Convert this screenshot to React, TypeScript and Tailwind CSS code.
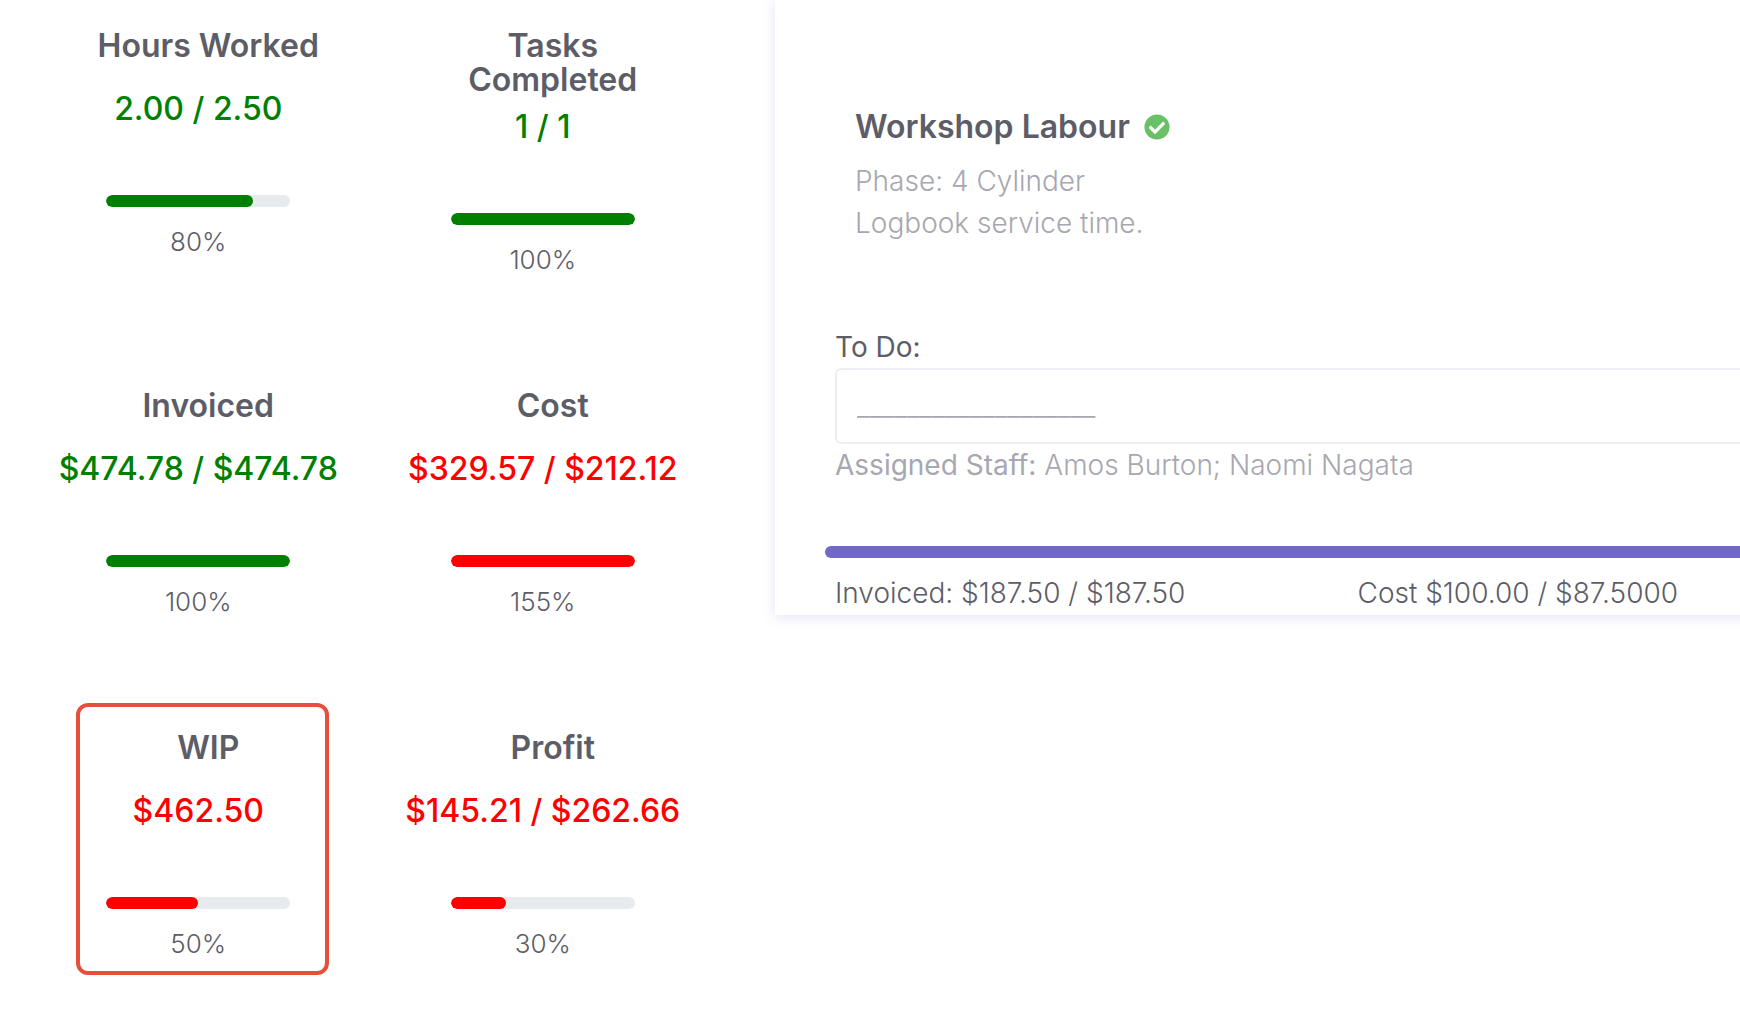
import clsx from 'clsx';
import { FaCheckCircle } from 'react-icons/fa';

interface Stat {
  title: string;
  value: string;
  percent: number;
  good: boolean;
  highlighted?: boolean;
}

const STATS: Stat[] = [
  { title: 'Hours Worked',    value: '2.00 / 2.50',       percent: 80,  good: true },
  { title: 'Tasks Completed', value: '1 / 1',             percent: 100, good: true },
  { title: 'Invoiced',        value: '$474.78 / $474.78', percent: 100, good: true },
  { title: 'Cost',            value: '$329.57 / $212.12', percent: 155, good: false },
  { title: 'WIP',             value: '$462.50',           percent: 50,  good: false, highlighted: true },
  { title: 'Profit',          value: '$145.21 / $262.66', percent: 30,  good: false },
];

function StatTile({ stat }: { stat: Stat }) {
  return (
    <section className="relative flex flex-col items-center text-center">
      {stat.highlighted && (
        <div className="pointer-events-none absolute -top-7 -bottom-2.5 left-[50px] right-[42px] rounded-xl border-4 border-[#e5503c]" />
      )}
      <h2 className="min-h-[50px] w-64 pl-5 text-[32px] leading-[34px] font-semibold">{stat.title}</h2>
      <p className={clsx('text-[32px] leading-[60px] font-medium whitespace-nowrap', stat.good ? 'text-[#008000]' : 'text-[#ff0000]')}>
        {stat.value}
      </p>
      <div className="mt-14 h-3 w-46 overflow-hidden rounded-full bg-[#e8ebee]">
        <div
          className={clsx('h-full rounded-full', stat.good ? 'bg-[#008000]' : 'bg-[#ff0000]')}
          style={{ width: `${Math.min(stat.percent, 100)}%` }}
        />
      </div>
      <p className="mt-3.5 text-[26px] leading-[42px] font-light">{stat.percent}%</p>
    </section>
  );
}

export default function App() {
  return (
    <div className="flex min-h-screen items-start overflow-hidden bg-white font-['Inter','Open_Sans',sans-serif] text-[#5d5d67]">
      {/* ── Job totals ───────────────────────────────────────────── */}
      <div className="grid w-[775px] shrink-0 grid-cols-2 gap-y-[108px] pt-[29px] pr-15 pb-14 pl-[26px]">
        {STATS.map(s => (
          <StatTile key={s.title} stat={s} />
        ))}
      </div>

      {/* ── Task card, runs off the right edge ───────────────────── */}
      <main className="-mr-[140px] min-w-0 flex-1 bg-white pt-[106px] pb-[1px] shadow-[0_2px_12px_rgba(105,95,215,0.18)]">
        <div className="pl-20">
          <div className="flex items-center gap-3.5">
            <h1 className="text-[32px] leading-[42px] font-semibold">Workshop Labour</h1>
            <FaCheckCircle className="size-[26px] text-[#69c067]" />
          </div>
          <div className="mt-3 text-[28px] leading-[42px] font-light text-[#a7a7b1]">
            <p>Phase: 4 Cylinder</p>
            <p>Logbook service time.</p>
          </div>
        </div>

        <div className="mt-[82px] pl-[60px] text-[28px] leading-[42px]">
          <label htmlFor="todo" className="block">To Do:</label>
          <input
            id="todo"
            type="text"
            defaultValue="___________________"
            className="h-19 w-full rounded-md border-2 border-[#ededf5] px-5 font-light text-[#a7a7b1] focus:outline-none"
          />
          <p className="font-light text-[#a7a7b1]">
            <span className="font-normal">Assigned Staff:</span> Amos Burton; Naomi Nagata
          </p>
        </div>

        <div className="mt-15 ml-[50px] h-3 rounded-full bg-[#7168c8]" />
        <div className="mt-3.5 grid grid-cols-2 pl-[60px] text-[28px] leading-[42px] font-light">
          <p>Invoiced: $187.50 / $187.50</p>
          <p>Cost $100.00 / $87.5000</p>
        </div>
      </main>
    </div>
  );
}
